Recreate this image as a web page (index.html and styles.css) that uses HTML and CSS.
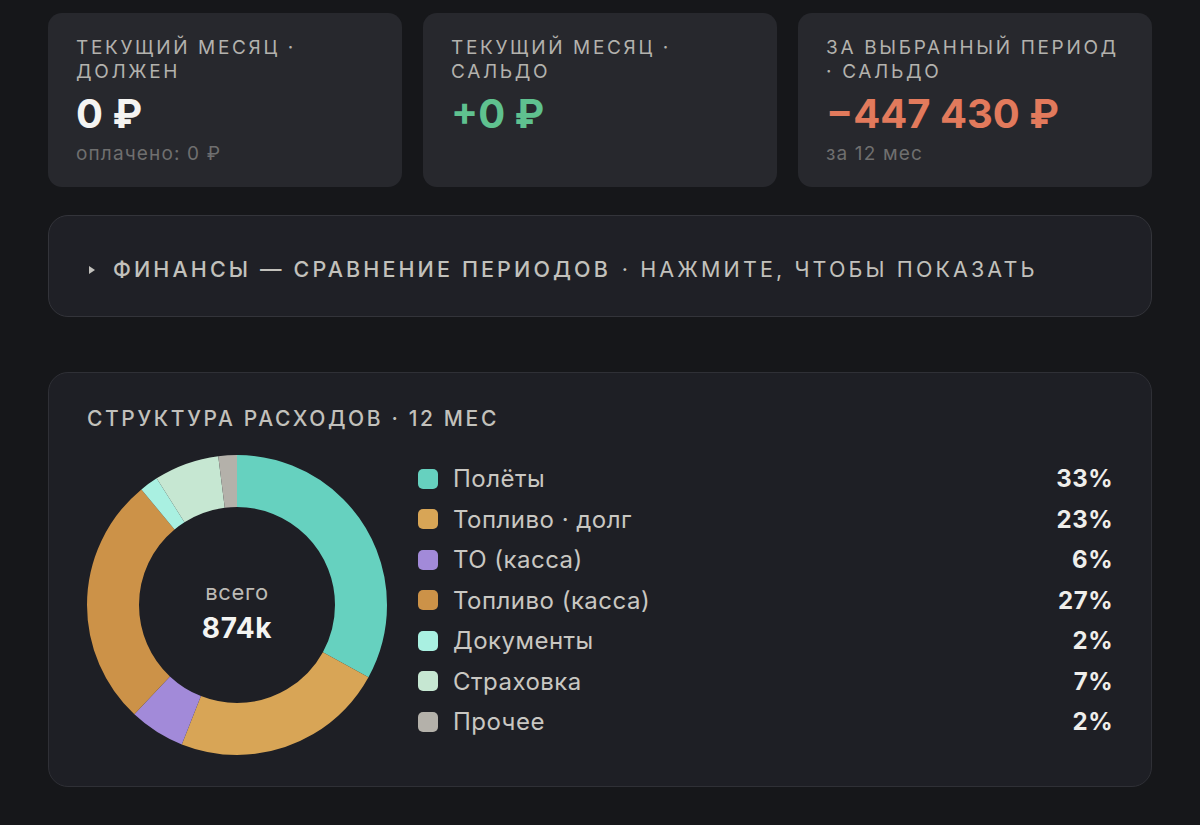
FILE: index.html
```html
<!DOCTYPE html>
<html lang="ru">
<head>
  <meta charset="UTF-8">
  <meta name="viewport" content="width=device-width, initial-scale=1.0">
  <title>Финансы</title>
  <link rel="stylesheet" href="styles.css">
</head>
<body>
  <div class="page">
    <div class="stats">
      <div class="stat">
        <div class="stat-label">Текущий месяц · должен</div>
        <div class="stat-value">0 ₽</div>
        <div class="stat-sub">оплачено: 0 ₽</div>
      </div>
      <div class="stat">
        <div class="stat-label">Текущий месяц · сальдо</div>
        <div class="stat-value positive">+0 ₽</div>
      </div>
      <div class="stat">
        <div class="stat-label">За выбранный период · сальдо</div>
        <div class="stat-value negative">−447 430 ₽</div>
        <div class="stat-sub">за 12 мес</div>
      </div>
    </div>

    <details class="compare">
      <summary>Финансы — сравнение периодов <span class="hint">· нажмите, чтобы показать</span></summary>
    </details>

    <div class="panel">
      <h2 class="panel-title">Структура расходов · 12 мес</h2>
      <div class="breakdown">
        <div class="donut">
          <svg width="300" height="300" viewBox="0 0 300 300">
            <g id="slices" transform="rotate(-90 150 150)"></g>
          </svg>
          <div class="donut-center">
            <div class="donut-caption">всего</div>
            <div class="donut-total">874k</div>
          </div>
        </div>
        <ul id="legend" class="legend"></ul>
      </div>
    </div>
  </div>

  <script>
    const EXPENSES = [
      { name: 'Полёты', pct: 33, color: '#66d1bf' },
      { name: 'Топливо · долг', pct: 23, color: '#d8a556' },
      { name: 'ТО (касса)', pct: 6, color: '#a28ad9' },
      { name: 'Топливо (касса)', pct: 27, color: '#cc9248' },
      { name: 'Документы', pct: 2, color: '#a9f0e1' },
      { name: 'Страховка', pct: 7, color: '#c6e7d2' },
      { name: 'Прочее', pct: 2, color: '#b4b1aa' }
    ];

    const slices = document.getElementById('slices');
    const legend = document.getElementById('legend');
    const NS = 'http://www.w3.org/2000/svg';
    let offset = 0;

    EXPENSES.forEach(item => {
      const circle = document.createElementNS(NS, 'circle');
      circle.setAttribute('cx', 150);
      circle.setAttribute('cy', 150);
      circle.setAttribute('r', 124);
      circle.setAttribute('fill', 'none');
      circle.setAttribute('stroke', item.color);
      circle.setAttribute('stroke-width', 52);
      circle.setAttribute('pathLength', 100);
      circle.setAttribute('stroke-dasharray', `${item.pct} ${100 - item.pct}`);
      circle.setAttribute('stroke-dashoffset', -offset);
      slices.appendChild(circle);
      offset += item.pct;

      const row = document.createElement('li');
      row.className = 'legend-row';
      row.innerHTML = `
        <span class="swatch" style="background:${item.color}"></span>
        <span class="legend-name">${item.name}</span>
        <span class="legend-pct">${item.pct}%</span>`;
      legend.appendChild(row);
    });
  </script>
</body>
</html>
```

FILE: styles.css
```css
body {
  margin: 0;
  background-color: #16171a;
  font-family: Inter, "Noto Sans", sans-serif;
  color: #e8e7e3;
}
.page {
  padding: 13px 48px 40px;
}
.stats {
  display: grid;
  grid-template-columns: repeat(3, 1fr);
  gap: 21px;
}
.stat {
  background-color: #27282d;
  border-radius: 14px;
  padding: 23px 28px 22px;
}
.stat-label {
  font-size: 19px;
  line-height: 24px;
  letter-spacing: 0.14em;
  text-transform: uppercase;
  color: #b3b2ad;
}
.stat-value {
  margin-top: 6px;
  font-size: 40px;
  line-height: 48px;
  font-weight: 700;
  color: #f4f4f2;
}
.stat-value.positive {
  color: #5fc18f;
}
.stat-value.negative {
  color: #e27a5c;
}
.stat-sub {
  margin-top: 5px;
  font-size: 19px;
  line-height: 22px;
  letter-spacing: 0.06em;
  color: #6f6f6f;
}
.compare {
  margin-top: 28px;
  background-color: #1f2026;
  border: 1px solid #33343a;
  border-radius: 20px;
}
.compare summary {
  list-style: none;
  padding: 40px 38px 34px;
  font-size: 21.5px;
  line-height: 26px;
  font-weight: 500;
  letter-spacing: 0.145em;
  text-transform: uppercase;
  color: #c2c1bc;
  cursor: pointer;
}
.compare summary::-webkit-details-marker {
  display: none;
}
.compare summary::before {
  content: "";
  display: inline-block;
  vertical-align: middle;
  margin: -3px 18px 0 2px;
  border-left: 6px solid #c2c1bc;
  border-top: 4px solid transparent;
  border-bottom: 4px solid transparent;
}
.hint {
  font-weight: 400;
  margin-left: 2px;
}
.panel {
  margin-top: 55px;
  background-color: #1e1f25;
  border: 1px solid #2f3036;
  border-radius: 20px;
  padding: 32px 38px 31px;
}
.panel-title {
  margin: 0;
  font-size: 21px;
  line-height: 28px;
  font-weight: 500;
  letter-spacing: 0.125em;
  text-transform: uppercase;
  color: #c2c1bc;
}
.breakdown {
  display: flex;
  align-items: center;
  gap: 31px;
  margin-top: 22px;
}
.donut {
  position: relative;
  width: 300px;
  height: 300px;
  flex-shrink: 0;
}
.donut svg {
  display: block;
}
.donut-center {
  position: absolute;
  inset: 0;
  padding-top: 14px;
  display: flex;
  flex-direction: column;
  align-items: center;
  justify-content: center;
  text-align: center;
}
.donut-caption {
  font-size: 22px;
  line-height: 26px;
  letter-spacing: 0.03em;
  color: #bdbbb6;
}
.donut-total {
  margin-top: 6px;
  font-size: 28px;
  line-height: 34px;
  font-weight: 700;
  letter-spacing: 0.02em;
  color: #f4f4f2;
}
.legend {
  flex: 1;
  list-style: none;
  margin: -10px 0 0;
  padding: 0;
}
.legend-row {
  display: flex;
  align-items: center;
  height: 40.5px;
  font-size: 24px;
  letter-spacing: 0.02em;
}
.swatch {
  width: 20px;
  height: 20px;
  border-radius: 5px;
  margin-right: 15px;
}
.legend-name {
  flex: 1;
  color: #c9c7c2;
}
.legend-pct {
  font-weight: 700;
  color: #efeeeb;
}
```
